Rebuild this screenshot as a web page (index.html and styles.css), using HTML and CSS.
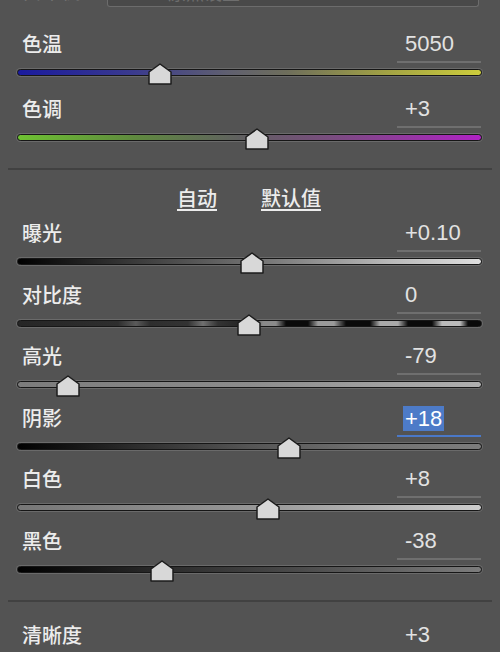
FILE: index.html
```html
<!DOCTYPE html>
<html lang="zh-CN">
<head>
    <meta charset="UTF-8">
    <meta name="viewport" content="width=device-width, initial-scale=1.0">
    <title>基本</title>
    <link rel="stylesheet" href="styles.css">
</head>
<body>
    <div class="panel">
        <div class="wb">
            <span class="wb-label">白平衡:</span>
            <div class="wb-box"><span>原照设置</span></div>
        </div>

        <div class="slider wide">
            <div class="head"><span class="label">色温</span><span class="value">5050</span></div>
            <div class="track temp"><svg class="thumb" style="left: calc(30.6% - 12px)" viewBox="0 0 24 22"><polygon points="1,9 12,1 23,9 23,21 1,21"/></svg></div>
        </div>
        <div class="slider wide">
            <div class="head"><span class="label">色调</span><span class="value">+3</span></div>
            <div class="track tint"><svg class="thumb" style="left: calc(51.6% - 12px)" viewBox="0 0 24 22"><polygon points="1,9 12,1 23,9 23,21 1,21"/></svg></div>
        </div>

        <div class="sep"></div>

        <div class="links">
            <a href="#">自动</a>
            <a href="#">默认值</a>
        </div>

        <div class="slider">
            <div class="head"><span class="label">曝光</span><span class="value">+0.10</span></div>
            <div class="track exposure"><svg class="thumb" style="left: calc(50.6% - 12px)" viewBox="0 0 24 22"><polygon points="1,9 12,1 23,9 23,21 1,21"/></svg></div>
        </div>
        <div class="slider">
            <div class="head"><span class="label">对比度</span><span class="value">0</span></div>
            <div class="track contrast"><svg class="thumb" style="left: calc(49.9% - 12px)" viewBox="0 0 24 22"><polygon points="1,9 12,1 23,9 23,21 1,21"/></svg></div>
        </div>
        <div class="slider">
            <div class="head"><span class="label">高光</span><span class="value">-79</span></div>
            <div class="track highlights"><svg class="thumb" style="left: calc(10.8% - 12px)" viewBox="0 0 24 22"><polygon points="1,9 12,1 23,9 23,21 1,21"/></svg></div>
        </div>
        <div class="slider">
            <div class="head"><span class="label">阴影</span><span class="value active"><span class="sel">+18</span></span></div>
            <div class="track shadows"><svg class="thumb" style="left: calc(58.6% - 12px)" viewBox="0 0 24 22"><polygon points="1,9 12,1 23,9 23,21 1,21"/></svg></div>
        </div>
        <div class="slider">
            <div class="head"><span class="label">白色</span><span class="value">+8</span></div>
            <div class="track whites"><svg class="thumb" style="left: calc(54% - 12px)" viewBox="0 0 24 22"><polygon points="1,9 12,1 23,9 23,21 1,21"/></svg></div>
        </div>
        <div class="slider">
            <div class="head"><span class="label">黑色</span><span class="value">-38</span></div>
            <div class="track blacks"><svg class="thumb" style="left: calc(31% - 12px)" viewBox="0 0 24 22"><polygon points="1,9 12,1 23,9 23,21 1,21"/></svg></div>
        </div>

        <div class="sep sep-low"></div>

        <div class="slider">
            <div class="head"><span class="label">清晰度</span><span class="value">+3</span></div>
        </div>
    </div>
</body>
</html>
```

FILE: styles.css
```css
body {
    margin: 0;
    padding: 0;
    background: #535353;
    color: #e6e6e6;
    font-family: "Noto Sans CJK SC", "Liberation Sans", sans-serif;
    overflow: hidden;
}
.panel {
    padding: 0 18px 0 17px;
}

/* white balance row, mostly scrolled off the top */
.wb {
    display: flex;
    height: 7px;
    overflow: hidden;
    margin-bottom: 23px;
}
.wb-label {
    width: 85px;
    padding-left: 5px;
    margin-top: -19px;
    font-size: 20px;
    line-height: 20px;
    color: #7a7a7a;
}
.wb-box {
    width: 370px;
    height: 6px;
    border: 1px solid #6c6c6c;
    border-top: none;
    border-radius: 0 0 3px 3px;
    background: #494949;
    overflow: hidden;
}
.wb-box span {
    display: block;
    margin: -18px 0 0 60px;
    font-size: 18px;
    line-height: 20px;
    color: #6e6e6e;
}

.slider {
    margin-bottom: 15.5px;
}
.slider.wide {
    margin-bottom: 19px;
}
.head {
    display: flex;
    justify-content: space-between;
    height: 33px;
}
.label {
    padding-left: 5px;
    font-size: 20px;
    font-weight: 500;
    line-height: 28px;
    color: #ececec;
}
.value {
    width: 76px;
    height: 31px;
    margin-right: 1px;
    padding-left: 8px;
    border-bottom: 2px solid #6f6f6f;
    font-family: "Liberation Sans", sans-serif;
    font-size: 22px;
    line-height: 28px;
    color: #e2e2e2;
}
.value.active {
    border-bottom-color: #4a78c8;
    padding-left: 6px;
    width: 78px;
}
.sel {
    display: inline-block;
    padding: 0 2px;
    line-height: 25px;
    margin-top: 2px;
    background: #4d7bc8;
    color: #fff;
}

.track {
    position: relative;
    height: 5px;
    margin-top: 6px;
    border: 1px solid #161616;
    border-radius: 4px;
    box-shadow: 0 0 0 1px rgba(125, 125, 125, 0.55);
}
.thumb {
    position: absolute;
    top: -7px;
    width: 24px;
    height: 22px;
}
.thumb polygon {
    fill: #d8d8d8;
    stroke: #1c1c1c;
    stroke-width: 1.5;
    stroke-linejoin: round;
}

.temp {
    background: linear-gradient(to right, #1a1a9e, #3b3b8e 25%, #5f5f70 45%, #6e6e5c 58%, #a3a344 80%, #cdcd3c);
}
.tint {
    background: linear-gradient(to right, #6ec232, #5f8a3e 25%, #606060 48%, #7a4c80 68%, #b022c4);
}
.exposure {
    background: linear-gradient(to right, #000, #3a3a3a 25%, #7a7a7a 55%, #b8b8b8 80%, #dedede);
}
.contrast {
    background: linear-gradient(to right,
        #262626 0px, #2e2e2e 100px, #5a5a5a 118px, #2e2e2e 132px,
        #333 170px, #707070 185px, #333 200px, #222 228px,
        #8a8a8a 245px, #8a8a8a 258px, #0a0a0a 268px, #0a0a0a 290px,
        #9a9a9a 300px, #9a9a9a 316px, #0a0a0a 328px, #0a0a0a 352px,
        #aaa 362px, #aaa 380px, #0a0a0a 390px, #0a0a0a 414px,
        #bbb 424px, #bbb 442px, #0a0a0a 450px, #0a0a0a 465px);
}
.highlights {
    background: linear-gradient(to right, #7c7c7c, #8c8c8c 50%, #b0b0b0);
}
.shadows {
    background: linear-gradient(to right, #000, #2c2c2c 25%, #555 50%, #707070 75%, #7c7c7c);
}
.whites {
    background: linear-gradient(to right, #777, #969696 50%, #cccccc);
}
.blacks {
    background: linear-gradient(to right, #000, #2a2a2a 30%, #4a4a4a 60%, #7c7c7c);
}

.sep {
    height: 2px;
    margin: 27px -10px 0 -9px;
    background: #414141;
}
.sep-low {
    margin-bottom: 19px;
}
.links {
    display: flex;
    justify-content: center;
    gap: 44px;
    height: 49px;
    padding-right: 1px;
}
.links a {
    margin-top: 15px;
    font-size: 20px;
    font-weight: 500;
    line-height: 26px;
    color: #ececec;
    text-decoration: underline;
    text-underline-offset: 3px;
    text-decoration-thickness: 1.5px;
}
```
